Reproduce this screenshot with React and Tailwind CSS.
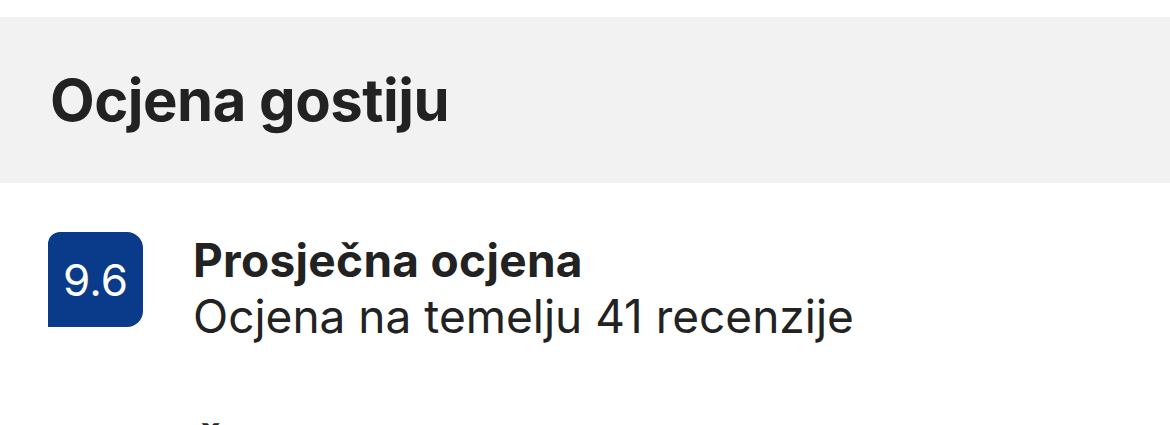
export default function App() {
  return (
    <div className="w-[1170px] h-[425px] overflow-hidden bg-white text-[#222222] font-['Inter',sans-serif]">
      <div className="h-[17px]" />
      {/* Section header */}
      <div className="h-[166px] bg-[#f2f2f2] flex items-center px-[50px]">
        <h2 className="text-[58px] font-bold tracking-[-0.5px] leading-none">Ocjena gostiju</h2>
      </div>

      {/* Average score row */}
      <div className="flex items-start pl-[48px] pt-[49px] gap-[50px]">
        <div className="w-[95px] h-[95px] shrink-0 bg-[#0a3a8a] rounded-tl-[12px] rounded-tr-[16px] rounded-br-[16px] flex items-center justify-center">
          <span className="text-white text-[44px] leading-none">9.6</span>
        </div>
        <div className="flex flex-col">
          <span className="text-[46px] font-bold leading-[56px] tracking-[0.3px]">Prosječna ocjena</span>
          <span className="text-[46px] leading-[56px]">Ocjena na temelju 41 recenzije</span>
        </div>
      </div>

      {/* Next row, cut off by the viewport */}
      <div className="pl-[193px] pt-[78px]">
        <span className="text-[46px] font-bold leading-[56px]">Čistoća</span>
      </div>
    </div>
  );
}
